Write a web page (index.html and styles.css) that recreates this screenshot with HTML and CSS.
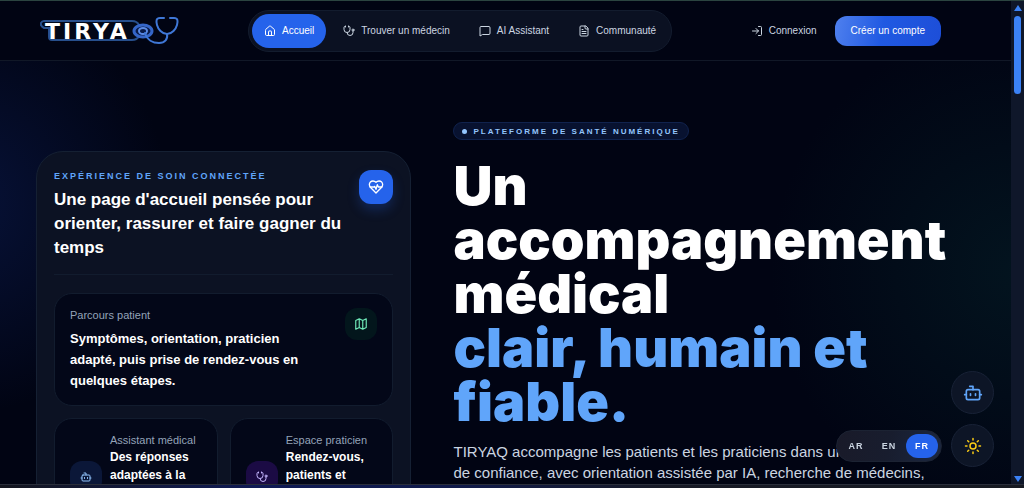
FILE: index.html
```html
<!DOCTYPE html>
<html lang="fr">
<head>
    <meta charset="UTF-8">
    <meta name="viewport" content="width=device-width, initial-scale=1.0">
    <title>TIRYAQ</title>
    <link rel="stylesheet" href="styles.css">
</head>
<body>
    <!-- Shared icons -->
    <svg class="sprite" aria-hidden="true">
        <symbol id="icon-stethoscope" viewBox="0 0 24 24">
            <path d="M11 2v2M5 2v2M5 3H4a2 2 0 0 0-2 2v4a6 6 0 0 0 12 0V5a2 2 0 0 0-2-2h-1M8 15a6 6 0 0 0 12 0v-3"/>
            <circle cx="20" cy="10" r="2"/>
        </symbol>
        <symbol id="icon-bot" viewBox="0 0 24 24">
            <path d="M12 8V4H8M2 14h2M20 14h2M15 13v2M9 13v2"/>
            <rect width="16" height="12" x="4" y="8" rx="2"/>
        </symbol>
    </svg>

    <div class="window">
        <div class="page">
            <!-- Header -->
            <header class="header">
                <a class="logo" href="#" aria-label="TIRYAQ">
                    <svg width="142" height="32" viewBox="0 0 142 32">
                        <path class="logo-plate" d="M4 6H92Q97 6 99 10V21Q97 25 92 25H12Q9 25 9 22V13H4Q0 11 1 8Q2 6 4 6Z"/>
                        <text class="logo-text" x="5" y="24">TIRYA</text>
                        <ellipse class="logo-ring" cx="103" cy="16" rx="9" ry="6"/>
                        <ellipse class="logo-ring thin" cx="103" cy="16" rx="4" ry="3"/>
                        <path class="logo-tube" d="M105 18c2 7 8 10 14 10 6 0 9-4 8-9"/>
                        <path class="logo-tube" d="M124 3h-4c-4 0-4 3-3 7s5 9 10 9 9-5 10-9 1-7-3-7h-4"/>
                    </svg>
                </a>
                <nav class="nav">
                    <a class="nav-link active" href="#">
                        <svg class="icon" viewBox="0 0 24 24"><path d="M15 21v-8a1 1 0 0 0-1-1h-4a1 1 0 0 0-1 1v8"/><path d="M3 10a2 2 0 0 1 .7-1.500l7-6a2 2 0 0 1 2.600 0l7 6A2 2 0 0 1 21 10v9a2 2 0 0 1-2 2H5a2 2 0 0 1-2-2z"/></svg>
                        Accueil
                    </a>
                    <a class="nav-link" href="#">
                        <svg class="icon"><use href="#icon-stethoscope"/></svg>
                        Trouver un médecin
                    </a>
                    <a class="nav-link" href="#">
                        <svg class="icon" viewBox="0 0 24 24"><path d="M22 17a2 2 0 0 1-2 2H7l-5 3V5a2 2 0 0 1 2-2h16a2 2 0 0 1 2 2z"/></svg>
                        AI Assistant
                    </a>
                    <a class="nav-link" href="#">
                        <svg class="icon" viewBox="0 0 24 24"><path d="M15 2H6a2 2 0 0 0-2 2v16a2 2 0 0 0 2 2h12a2 2 0 0 0 2-2V7z"/><path d="M14 2v4a2 2 0 0 0 2 2h4M10 9H8M16 13H8M16 17H8"/></svg>
                        Communauté
                    </a>
                </nav>
                <div class="account">
                    <a class="login" href="#">
                        <svg class="icon" viewBox="0 0 24 24"><path d="m10 17 5-5-5-5M15 12H3M15 3h4a2 2 0 0 1 2 2v14a2 2 0 0 1-2 2h-4"/></svg>
                        Connexion
                    </a>
                    <button class="signup" type="button">Créer un compte</button>
                </div>
            </header>

            <!-- Hero -->
            <main class="hero">
                <section class="panel">
                    <div class="panel-head">
                        <div>
                            <p class="eyebrow">EXPÉRIENCE DE SOIN CONNECTÉE</p>
                            <h2>Une page d'accueil pensée pour orienter, rassurer et faire gagner du temps</h2>
                        </div>
                        <span class="tile tile-blue">
                            <svg class="icon" viewBox="0 0 24 24"><path d="M19 14c1.500-1.500 3-3.200 3-5.500A5.500 5.500 0 0 0 16.500 3c-1.800 0-3 .5-4.500 2-1.500-1.500-2.700-2-4.500-2A5.500 5.500 0 0 0 2 8.500c0 2.300 1.500 4 3 5.500l7 7z"/><path d="M3.200 12H9.500l.5-1 2 4.500 2-7 1.500 3.500h5.300"/></svg>
                        </span>
                    </div>

                    <article class="card card-wide">
                        <div>
                            <p class="label">Parcours patient</p>
                            <p class="card-title">Symptômes, orientation, praticien adapté, puis prise de rendez-vous en quelques étapes.</p>
                        </div>
                        <span class="tile tile-green">
                            <svg class="icon" viewBox="0 0 24 24"><path d="m3 6 6-3 6 3 6-3v15l-6 3-6-3-6 3zM9 3v15M15 6v15"/></svg>
                        </span>
                    </article>

                    <div class="card-row">
                        <article class="card card-small">
                            <span class="tile tile-navy"><svg class="icon"><use href="#icon-bot"/></svg></span>
                            <div>
                                <p class="label">Assistant médical</p>
                                <p class="small-title">Des réponses adaptées à la</p>
                            </div>
                        </article>
                        <article class="card card-small">
                            <span class="tile tile-purple"><svg class="icon"><use href="#icon-stethoscope"/></svg></span>
                            <div>
                                <p class="label">Espace praticien</p>
                                <p class="small-title">Rendez-vous, patients et</p>
                            </div>
                        </article>
                    </div>
                </section>

                <section class="intro">
                    <p class="badge">PLATEFORME DE SANTÉ NUMÉRIQUE</p>
                    <h1>Un accompagnement médical <span>clair, humain et fiable.</span></h1>
                    <p class="lead">TIRYAQ accompagne les patients et les praticiens dans un<br>de confiance, avec orientation assistée par IA, recherche de médecins,</p>
                </section>
            </main>
        </div>

        <!-- Scrollbar -->
        <div class="scrollbar" aria-hidden="true">
            <span class="arrow up"></span>
            <span class="thumb"></span>
            <span class="arrow down"></span>
        </div>
    </div>
    <div class="taskbar"></div>

    <!-- Floating tools -->
    <div class="floating">
        <button class="round" type="button" aria-label="Assistant"><svg class="icon"><use href="#icon-bot"/></svg></button>
        <div class="floating-row">
            <div class="langs">
                <button type="button">AR</button>
                <button type="button">EN</button>
                <button class="active" type="button">FR</button>
            </div>
            <button class="round sun" type="button" aria-label="Thème">
                <svg class="icon" viewBox="0 0 24 24"><circle cx="12" cy="12" r="4"/><path d="M12 2v2M12 20v2M4.900 4.900l1.400 1.400M17.700 17.700l1.400 1.400M2 12h2M20 12h2M6.300 17.700l-1.400 1.400M19.100 4.900l-1.400 1.400"/></svg>
            </button>
        </div>
    </div>
</body>
</html>
```
FILE: styles.css
```css
* {
    box-sizing: border-box;
}

body {
    display: flex;
    flex-direction: column;
    margin: 0;
    height: 100vh;
    overflow: hidden;
    background: #020617;
    color: #fff;
    font-family: "Liberation Sans", Arial, sans-serif;
    font-size: 11px;
}

h1, h2, p {
    margin: 0;
}

a {
    color: inherit;
    text-decoration: none;
}

button {
    border: none;
    padding: 0;
    font-family: inherit;
    color: inherit;
    cursor: pointer;
}

.sprite {
    position: absolute;
    width: 0;
    height: 0;
}

.icon {
    width: 12px;
    height: 12px;
    flex: none;
    fill: none;
    stroke: currentColor;
    stroke-width: 2;
    stroke-linecap: round;
    stroke-linejoin: round;
}

.window {
    display: flex;
    flex: 1;
    min-height: 0;
    border-top: 1px solid #2b4440;
}

.taskbar {
    height: 4px;
    border-top: 1px solid #2a2e3a;
    background: linear-gradient(90deg, #14161f, #0f1a55 25%, #101a4a 45%, #171a26 65%, #171a22);
}

.page {
    flex: 1;
    min-width: 0;
    overflow: hidden;
    background:
        radial-gradient(circle at -4% 42%, #071238 0, transparent 210px),
        radial-gradient(circle at 101% 56%, #03141f 0, transparent 250px),
        #010413;
}

/* Header */
.header {
    display: grid;
    grid-template-columns: 208px auto 1fr;
    align-items: center;
    height: 60px;
    padding: 0 70px 0 40px;
    border-bottom: 1px solid #111827;
    background: #010413;
}

.logo svg {
    display: block;
}

.logo-plate {
    fill: #020818;
    stroke: #274f8c;
    stroke-width: 2;
}

.logo-text {
    fill: #fff;
    font-family: "DejaVu Sans", sans-serif;
    font-size: 22px;
    font-weight: bold;
    letter-spacing: 3px;
}

.logo-ring {
    fill: #0a1c4a;
    stroke: #3566c8;
    stroke-width: 3;
}

.logo-ring.thin {
    stroke: #5b8be6;
    stroke-width: 2;
}

.logo-tube {
    fill: none;
    stroke: #3f77d6;
    stroke-width: 2;
    stroke-linecap: round;
}

.nav {
    display: flex;
    gap: 5px;
    padding: 3px;
    border: 1px solid #131c2e;
    border-radius: 21px;
    background: #0b1122;
}

.nav-link,
.login {
    display: flex;
    align-items: center;
    gap: 6px;
    color: #cbd5e1;
    font-size: 10px;
    white-space: nowrap;
}

.nav-link {
    height: 34px;
    padding: 0 12px;
    border-radius: 17px;
}

.nav-link.active {
    background: #2563eb;
    color: #fff;
}

.account {
    display: flex;
    justify-content: flex-end;
    align-items: center;
    gap: 18px;
}

.signup {
    height: 30px;
    padding: 0 16px;
    border-radius: 12px;
    background: linear-gradient(100deg, #4f80ee, #2059e2 45%, #1d4ed8);
    font-size: 10px;
    white-space: nowrap;
}

/* Hero */
.hero {
    display: grid;
    grid-template-columns: 72fr 100fr;
    gap: 42px;
    padding: 61px 36px 0;
}

.panel {
    margin-top: 29px;
    padding: 18px 17px;
    border: 1px solid #152033;
    border-radius: 27px;
    background: #0c1223;
    min-width: 0;
}

.panel-head {
    display: flex;
    justify-content: space-between;
    gap: 12px;
    padding-bottom: 14px;
    margin-bottom: 18px;
    border-bottom: 1px solid #121c2e;
}

.eyebrow {
    color: #60a5fa;
    font-size: 9px;
    font-weight: bold;
    line-height: 12px;
    letter-spacing: 2px;
}

h2 {
    margin-top: 6px;
    font-size: 17px;
    line-height: 24px;
}

.tile {
    display: flex;
    flex: none;
    align-items: center;
    justify-content: center;
    width: 32px;
    height: 32px;
    border-radius: 12px;
}

.tile-blue {
    width: 34px;
    height: 34px;
    background: #2563eb;
    box-shadow: 0 6px 12px rgba(37, 99, 235, 0.25);
}

.tile-blue .icon {
    width: 16px;
    height: 16px;
}

.tile-green {
    background: #03161c;
    color: #6ee7b7;
}

.tile-green .icon {
    width: 14px;
    height: 14px;
}

.tile-navy {
    background: #0b1738;
    color: #93c5fd;
}

.tile-purple {
    background: #1b0b44;
    color: #c4b5fd;
}

.card {
    display: flex;
    padding: 14px 15px;
    border: 1px solid #121c2e;
    border-radius: 18px;
    background: #030718;
}

.card-wide {
    justify-content: space-between;
    gap: 24px;
}

.label {
    color: #94a3b8;
    font-size: 11px;
    line-height: 14px;
    white-space: nowrap;
}

.card-title {
    margin-top: 6px;
    font-size: 13px;
    font-weight: bold;
    line-height: 21px;
}

.card-row {
    display: grid;
    grid-template-columns: 1fr 1fr;
    gap: 12px;
    margin-top: 12px;
}

.card-small {
    gap: 8px;
    padding-bottom: 48px;
}

.card-small .tile {
    margin-top: 28px;
}

.small-title {
    margin-top: 1px;
    font-size: 12px;
    font-weight: bold;
    line-height: 18px;
}

.intro {
    min-width: 0;
}

.badge {
    display: inline-flex;
    align-items: center;
    gap: 6px;
    height: 18px;
    padding: 0 8px;
    border: 1px solid #10224d;
    border-radius: 9px;
    background: #081230;
    color: #93c5fd;
    font-size: 8px;
    font-weight: bold;
    letter-spacing: 2px;
    white-space: nowrap;
}

.badge::before {
    content: "";
    width: 5px;
    height: 5px;
    border-radius: 50%;
    background: #93c5fd;
}

h1 {
    margin-top: 19px;
    font-family: Inter, "Liberation Sans", sans-serif;
    font-size: 54px;
    font-weight: 900;
    line-height: 54px;
}

h1 span {
    display: block;
    color: #60a5fa;
}

.lead {
    margin-top: 12px;
    color: #cbd5e1;
    font-size: 15px;
    line-height: 21px;
    white-space: nowrap;
}

/* Scrollbar */
.scrollbar {
    display: flex;
    flex-direction: column;
    align-items: center;
    width: 13px;
    padding: 4px 0 2px;
    background: #0f172a;
}

.thumb {
    width: 7px;
    height: 78px;
    margin-top: 5px;
    border-radius: 4px;
    background: #3b82f6;
}

.arrow {
    border: 4px solid transparent;
}

.arrow.up {
    border-top: none;
    border-bottom: 6px solid #3b82f6;
}

.arrow.down {
    margin-top: auto;
    border-bottom: none;
    border-top: 6px solid #3b82f6;
}

/* Floating tools */
.floating {
    position: fixed;
    right: 30px;
    bottom: 21px;
    display: flex;
    flex-direction: column;
    align-items: flex-end;
    gap: 10px;
}

.floating-row {
    display: flex;
    align-items: center;
    gap: 9px;
}

.round {
    display: flex;
    align-items: center;
    justify-content: center;
    width: 43px;
    height: 43px;
    border: 1px solid #182236;
    border-radius: 50%;
    background: #0d1526;
    color: #60a5fa;
}

.round .icon {
    width: 20px;
    height: 20px;
}

.round.sun {
    color: #facc15;
}

.round.sun .icon {
    width: 18px;
    height: 18px;
}

.langs {
    display: flex;
    gap: 1px;
    padding: 3px;
    border: 1px solid #1c2333;
    border-radius: 16px;
    background: linear-gradient(100deg, #191a29, #181d2e 50%, #1b2740);
}

.langs button {
    width: 32px;
    height: 24px;
    border-radius: 12px;
    background: none;
    color: #cbd5e1;
    font-size: 9px;
    font-weight: bold;
    letter-spacing: 1px;
}

.langs button.active {
    background: #2563eb;
    color: #fff;
}
```
